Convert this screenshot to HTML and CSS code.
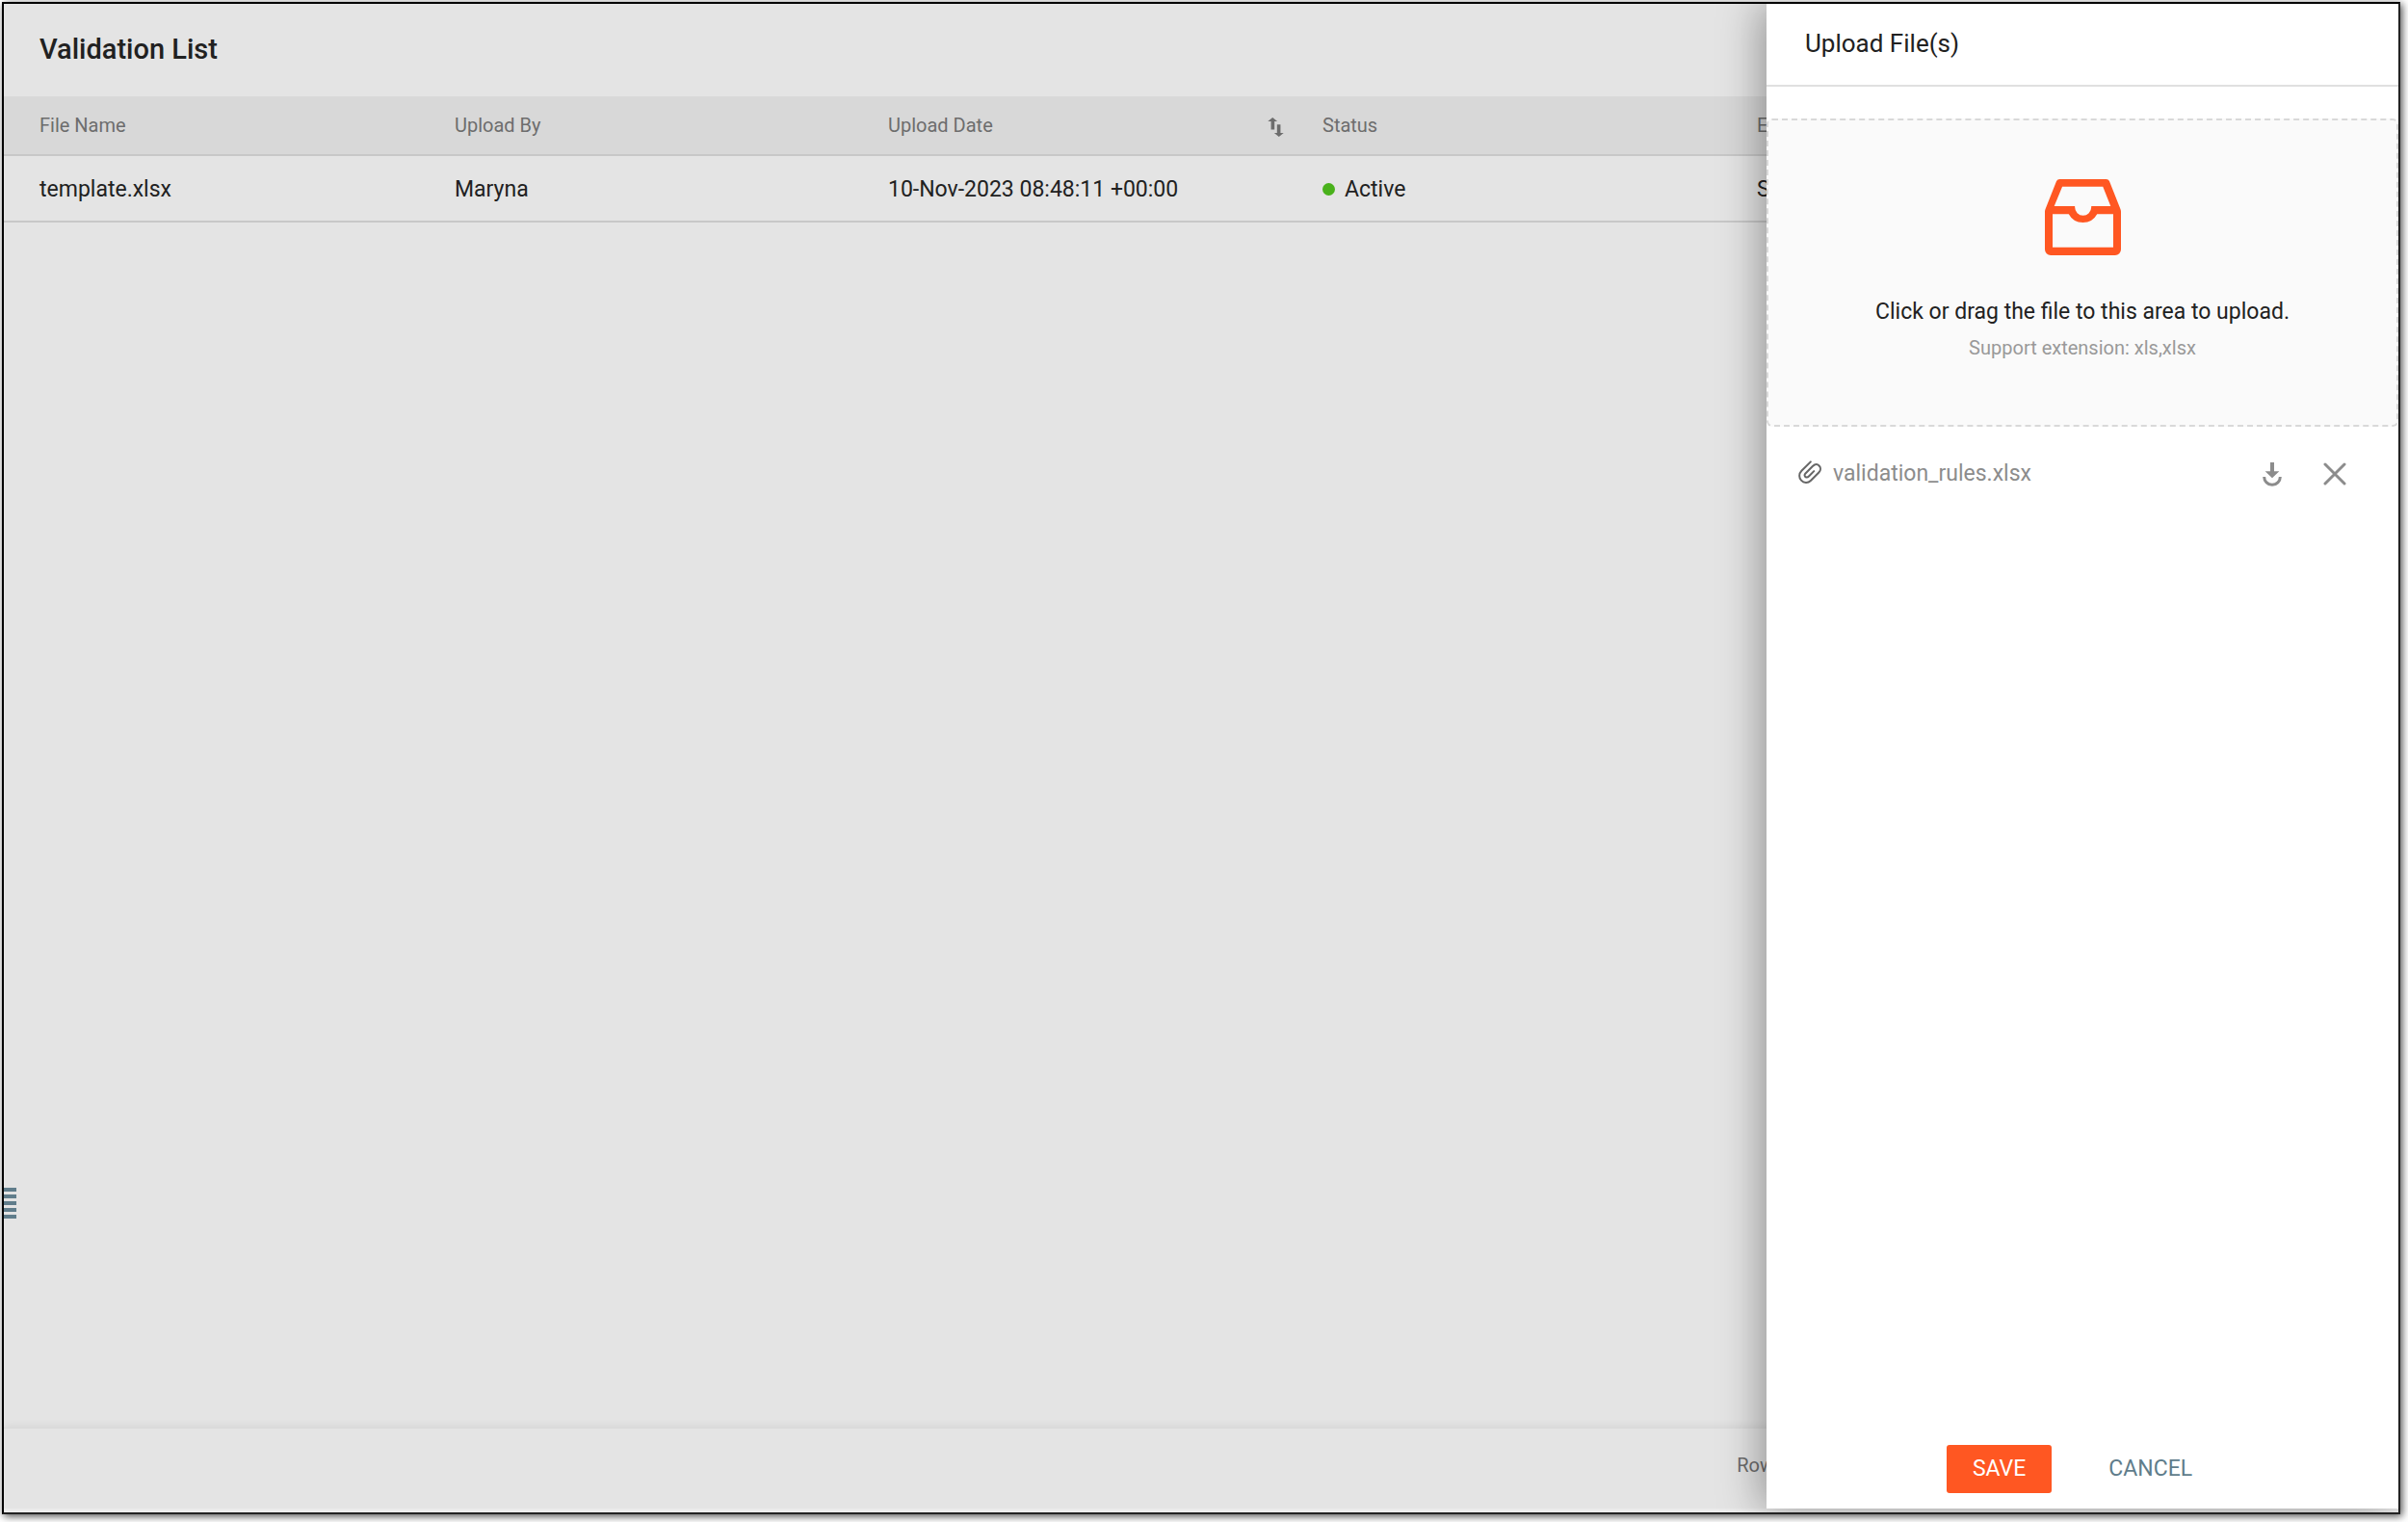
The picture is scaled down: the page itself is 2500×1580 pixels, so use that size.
FILE: index.html
```html
<!DOCTYPE html>
<html lang="en">
<head>
<meta charset="utf-8">
<title>Validation List</title>
<link rel="stylesheet" href="styles.css">
</head>
<body>
<div class="frame">
  <main class="page">
    <h1 class="page-title">Validation List</h1>
    <table class="list">
      <colgroup>
        <col class="col-name"><col class="col-by"><col class="col-date"><col class="col-status"><col>
      </colgroup>
      <thead>
        <tr>
          <th scope="col">File Name</th>
          <th scope="col">Upload By</th>
          <th scope="col">
            <div class="sortable">Upload Date
              <button class="icon-button" type="button" aria-label="Sort by upload date">
                <svg width="17" height="20" viewBox="0 0 50 61" fill="currentColor"><path d="M15 0L30 12H21V38H10V12H0zM35 61L20 49H29V22H40V49H50z"/></svg>
              </button>
            </div>
          </th>
          <th scope="col">Status</th>
          <th scope="col">E</th>
        </tr>
      </thead>
      <tbody>
        <tr>
          <td>template.xlsx</td>
          <td>Maryna</td>
          <td>10-Nov-2023 08:48:11 +00:00</td>
          <td><span class="status"><span class="dot"></span>Active</span></td>
          <td>S</td>
        </tr>
      </tbody>
    </table>
    <footer class="pager">Row</footer>
  </main>

  <button class="menu-handle" type="button" aria-label="Open menu"></button>

  <aside class="drawer" aria-labelledby="drawer-title">
    <h2 class="drawer-title" id="drawer-title">Upload File(s)</h2>
    <button class="dropzone" type="button">
      <svg width="79" height="79" viewBox="0 0 236 236" fill="currentColor" fill-rule="evenodd"><path d="M46 0H190Q197 0 200 6L234 92Q236 96 236 101V218a18 18 0 0 1-18 18H18a18 18 0 0 1-18-18V101Q0 96 2 92L36 6Q39 0 46 0ZM54 23L29 84H93V87a25.500 25.500 0 0 0 51 0V84H204L180 23ZM24 108V211H212V108H162A50 50 0 0 1 74 108Z"/></svg>
      <span class="dropzone-text">Click or drag the file to this area to upload.</span>
      <span class="dropzone-hint">Support extension: xls,xlsx</span>
    </button>
    <div class="file">
      <svg class="clip" width="24" height="24" viewBox="35 37 71 71" fill="none" stroke="currentColor" stroke-width="6" stroke-linecap="round"><path d="M73 41L45 69C36 78 37 91 44 98C52 107 65 107 73 99L98 74C105 67 104 58 99 53C93 47 85 49 79 55L57 77C53 81 54 86 58 88C62 90 65 88 68 85L83 70"/></svg>
      <span class="file-name">validation_rules.xlsx</span>
      <button class="icon-button" type="button" aria-label="Download">
        <svg width="20" height="25" viewBox="0 0 60 75"><path d="M24 0h12v28h16L30 49 8 28h16z" fill="currentColor"/><path d="M5 45a25 25 0 0 0 50 0" fill="none" stroke="currentColor" stroke-width="9"/></svg>
      </button>
      <button class="icon-button" type="button" aria-label="Remove">
        <svg width="24" height="24" viewBox="0 0 24 24" fill="none" stroke="currentColor" stroke-width="3" stroke-linecap="round"><path d="M2 2L22 22M22 2L2 22"/></svg>
      </button>
    </div>
    <div class="actions">
      <button class="button primary" type="button">SAVE</button>
      <button class="button" type="button">CANCEL</button>
    </div>
  </aside>
</div>
</body>
</html>
```
FILE: styles.css
```css
* { box-sizing: border-box; }

body {
  margin: 0;
  background: #fff;
  color: #212121;
  font: 23px/32px Roboto, sans-serif;
  overflow: hidden;
}

button {
  border: 0;
  padding: 0;
  background: none;
  color: inherit;
  font: inherit;
}

svg { display: block; }

.frame {
  position: relative;
  display: flex;
  height: calc(100vh - 10px);
  margin: 2px 8px 8px 2px;
  padding-bottom: 4px;
  border: 2px solid #222;
  border-color: #000 #222 #222 #000;
  background: #eee;
  box-shadow: 2px 2px 8px rgba(0, 0, 0, .7);
  overflow: hidden;
}

.page {
  flex: 1;
  display: flex;
  flex-direction: column;
  background: #e4e4e4;
}

.page-title {
  margin: 0;
  padding: 27px 37px 29px;
  font-size: 29px;
  line-height: 40px;
  font-weight: 500;
}

.list {
  width: 100%;
  table-layout: fixed;
  border-collapse: collapse;
  text-align: left;
}

.col-name { width: 431px; }
.col-by { width: 450px; }
.col-date,
.col-status { width: 451px; }

.list th,
.list td {
  padding: 0 0 0 37px;
  border-bottom: 2px solid #c8c8c8;
}

.list th {
  height: 61px;
  background: #d8d8d8;
  color: #6d6d6d;
  font-size: 20px;
  font-weight: 400;
}

.list td {
  height: 69px;
  padding-top: 2px;
}

.sortable {
  display: flex;
  justify-content: space-between;
  align-items: center;
  padding-right: 3px;
}

.sortable .icon-button { padding-top: 3px; }

.status {
  display: flex;
  align-items: center;
  gap: 10px;
}

.dot {
  width: 13px;
  height: 13px;
  border-radius: 50%;
  background: #49b11b;
}

.pager {
  margin-top: auto;
  padding: 22px 648px 29px 0;
  border-top: 1px solid #dadada;
  box-shadow: 0 -2px 8px rgba(0, 0, 0, .06);
  color: #6d6d6d;
  font-size: 20px;
  text-align: right;
}

.menu-handle {
  position: absolute;
  left: 0;
  bottom: 305px;
  width: 13px;
  height: 32px;
  background: repeating-linear-gradient(#607d8b 0 4px, transparent 4px 7px);
}

.drawer {
  position: absolute;
  top: 0;
  right: 0;
  bottom: 4px;
  width: 656px;
  display: flex;
  flex-direction: column;
  background: #fff;
  box-shadow: -6px 0 40px rgba(0, 0, 0, .35);
}

.drawer-title {
  margin: 0 0 33px;
  padding: 25px 40px 27px;
  border-bottom: 2px solid #e0e0e0;
  font-size: 26px;
  font-weight: 400;
}

.dropzone {
  display: flex;
  flex-direction: column;
  align-items: center;
  height: 320px;
  padding-top: 61px;
  border: 2px dashed #d9d9d9;
  border-radius: 6px;
  background: #fafafa;
  color: #ff5722;
}

.dropzone-text {
  margin-top: 43px;
  color: #212121;
}

.dropzone-hint {
  margin-top: 5px;
  color: #999;
  font-size: 20px;
}

.file {
  display: flex;
  align-items: center;
  padding: 33px 54px 32px 33px;
  color: #8c8c8c;
}

.clip {
  margin: 0 12px 4px 0;
  color: #666;
}

.file-name { flex: 1; }

.file .icon-button { margin-left: 43px; }

.actions {
  display: flex;
  justify-content: center;
  gap: 32px;
  margin-top: auto;
  padding-bottom: 16px;
}

.button {
  height: 50px;
  padding: 0 27px;
  border-radius: 3px;
  color: #607d8b;
}

.primary {
  background: #ff5722;
  color: #fff;
}
```
